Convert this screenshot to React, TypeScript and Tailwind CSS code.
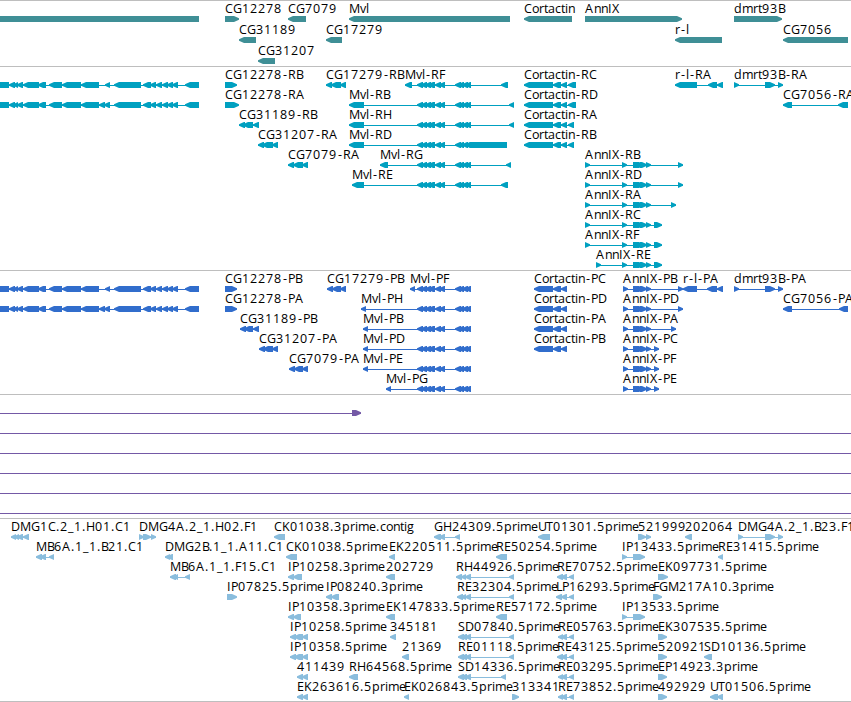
import React from "react";

type Exon = [number, number];
// label, direction, exons
type Feature = [string, "<" | ">", Exon[]];

// horizontal advance of each label character, in pixels
const ADVANCE: Record<string, number> = {
  A: 9, B: 7, C: 8, D: 9, E: 7, F: 6, G: 9, H: 9, I: 4, K: 8, L: 6, M: 11, P: 7, R: 8,
  S: 7, T: 7, U: 8, X: 7, a: 7, c: 6, d: 8, e: 7, g: 8, i: 3, l: 3, m: 11, n: 7, o: 7,
  p: 8, r: 5, t: 4, v: 6, "-": 6, ".": 4, _: 6,
};

const glyphPositions = (label: string, start: number) => {
  let x = start;
  return label
    .split("")
    .map((ch) => {
      const at = ch === "-" ? x + 1 : x;
      x += ADVANCE[ch] ?? 8;
      return at;
    })
    .join(" ");
};

const LONG_TAIL: Exon[] = [
  [114, 141], [143, 151], [150, 156], [156, 162], [162, 168], [167, 173], [172, 178], [185, 199],
];
const LONG_HEAD: Exon[] = [
  [-10, 9], [9, 15], [13, 18], [17, 23], [23, 39], [38, 46], [49, 62], [62, 81], [81, 99],
];
const LONG_A: Exon[] = [...LONG_HEAD, [105, 110], ...LONG_TAIL];
const LONG_B: Exon[] = [...LONG_HEAD, [99, 105], [104, 110], ...LONG_TAIL];

const MVL: Exon[] = [
  [417, 423], [421, 427], [425, 431], [428, 435], [435, 441], [439, 445],
  [455, 461], [458, 464], [462, 468], [465, 471],
];
const ANN: Exon[] = [[633, 644], [640, 647], [646, 651]];
const ANN_R: Exon[] = [[585, 590], [622, 627], ...ANN];
const ANN_P: Exon[] = [[623, 628], ...ANN];
const CORT_R: Exon[] = [[524, 553], [553, 561], [561, 567]];
const CORT_P: Exon[] = [[534, 553], [553, 561], [561, 567]];
const DMRT: Exon[] = [[734, 739], [765, 775], [778, 783]];

const genes: Feature[][] = [
  [
    ["", "<", [[-10, 199]]],
    ["CG12278", ">", [[225, 239]]],
    ["CG7079", "<", [[288, 306]]],
    ["Mvl", "<", [[349, 510]]],
    ["Cortactin", "<", [[524, 572]]],
    ["AnnIX", ">", [[585, 682]]],
    ["dmrt93B", ">", [[734, 782]]],
  ],
  [
    ["CG31189", "<", [[239, 256]]],
    ["CG17279", "<", [[326, 342]]],
    ["r-l", "<", [[675, 722]]],
    ["CG7056", "<", [[783, 848]]],
  ],
  [["CG31207", "<", [[258, 275]]]],
];

const transcripts: Feature[][] = [
  [
    ["", "<", LONG_A],
    ["CG12278-RB", ">", [[225, 237]]],
    ["CG17279-RB", "<", [[326, 332], [331, 341], [340, 346]]],
    ["Mvl-RF", "<", [[405, 412], ...MVL, [501, 508]]],
    ["Cortactin-RC", "<", [...CORT_R, [568, 576]]],
    ["r-l-RA", "<", [[675, 697], [708, 717], [717, 723]]],
    ["dmrt93B-RA", ">", DMRT],
  ],
  [
    ["", "<", LONG_B],
    ["CG12278-RA", ">", [[225, 239]]],
    ["Mvl-RB", "<", [[349, 364], ...MVL, [509, 514]]],
    ["Cortactin-RD", "<", [...CORT_R, [568, 576]]],
    ["CG7056-RA", "<", [[783, 792], [838, 848]]],
  ],
  [
    ["CG31189-RB", "<", [[239, 245], [243, 253], [253, 259]]],
    ["Mvl-RH", "<", [[349, 364], ...MVL, [509, 514]]],
    ["Cortactin-RA", "<", [...CORT_R, [568, 574]]],
  ],
  [
    ["CG31207-RA", "<", [[258, 264], [262, 273], [272, 278]]],
    ["Mvl-RD", "<", [[349, 364], ...MVL, [466, 507]]],
    ["Cortactin-RB", "<", [...CORT_R, [568, 574]]],
  ],
  [
    ["CG7079-RA", "<", [[288, 294], [293, 303], [302, 308]]],
    ["Mvl-RG", "<", [[380, 388], ...MVL, [506, 511]]],
    ["AnnIX-RB", ">", [...ANN_R, [678, 683]]],
  ],
  [
    ["Mvl-RE", "<", [[352, 364], ...MVL, [501, 508]]],
    ["AnnIX-RD", ">", [...ANN_R, [678, 683]]],
  ],
  [["AnnIX-RA", ">", [...ANN_R, [671, 676]]]],
  [["AnnIX-RC", ">", [...ANN_R, [654, 662]]]],
  [["AnnIX-RF", ">", [...ANN_R, [654, 662]]]],
  [["AnnIX-RE", ">", [[596, 601], [622, 627], ...ANN, [654, 662]]]],
];

const proteins: Feature[][] = [
  [
    ["", "<", LONG_A],
    ["CG12278-PB", ">", [[225, 237]]],
    ["CG17279-PB", "<", [[327, 333], [332, 341], [340, 346]]],
    ["Mvl-PF", "<", [[410, 415], ...MVL]],
    ["Cortactin-PC", "<", CORT_P],
    ["AnnIX-PB", ">", [...ANN_P, [678, 683]]],
    ["r-l-PA", "<", [[683, 697], [707, 717], [717, 723]]],
    ["dmrt93B-PA", ">", DMRT],
  ],
  [
    ["", "<", LONG_B],
    ["CG12278-PA", ">", [[225, 237]]],
    ["Mvl-PH", "<", [[361, 366], ...MVL]],
    ["Cortactin-PD", "<", CORT_P],
    ["AnnIX-PD", ">", [...ANN_P, [678, 683]]],
    ["CG7056-PA", "<", [[783, 792], [839, 848]]],
  ],
  [
    ["CG31189-PB", "<", [[240, 246], [244, 253], [253, 259]]],
    ["Mvl-PB", "<", [[363, 368], ...MVL]],
    ["Cortactin-PA", "<", CORT_P],
    ["AnnIX-PA", ">", [...ANN_P, [671, 676]]],
  ],
  [
    ["CG31207-PA", "<", [[259, 265], [263, 273], [272, 278]]],
    ["Mvl-PD", "<", [[363, 368], ...MVL]],
    ["Cortactin-PB", "<", CORT_P],
    ["AnnIX-PC", ">", [...ANN_P, [654, 659]]],
  ],
  [
    ["CG7079-PA", "<", [[289, 295], [294, 303], [302, 308]]],
    ["Mvl-PE", "<", [[363, 368], ...MVL]],
    ["AnnIX-PF", ">", [...ANN_P, [654, 659]]],
  ],
  [
    ["Mvl-PG", "<", [[386, 391], ...MVL]],
    ["AnnIX-PE", ">", [...ANN_P, [654, 659]]],
  ],
];

const spanning: Exon[] = [[-20, -10], [861, 870]];

const alignments: Feature[][] = [
  [["", ">", [[-20, -10], [352, 361]]]],
  [["", ">", spanning]],
  [["", ">", spanning]],
  [["", ">", spanning]],
  [["", ">", spanning]],
  [["", ">", spanning]],
];

const ests: Feature[][] = [
  [
    ["DMG1C.2_1.H01.C1", "<", [[11, 16], [14, 19], [17, 23], [23, 29]]],
    ["DMG4A.2_1.H02.F1", ">", [[139, 144], [143, 151], [151, 156]]],
    ["CK01038.3prime.contig", "<", [[274, 285]]],
    ["GH24309.5prime", "<", [[434, 441], [439, 445], [455, 460]]],
    ["UT01301.5prime", "<", [[538, 550]]],
    ["521999", ">", [[638, 646], [646, 651]]],
    ["202064", "<", [[685, 692]]],
    ["DMG4A.2_1.B23.F1", ">", [[738, 743], [765, 775], [778, 783]]],
  ],
  [
    ["MB6A.1_1.B21.C1", "<", [[36, 42], [40, 46], [49, 54]]],
    ["DMG2B.1_1.A11.C1", "<", [[165, 170], [167, 173]]],
    ["CK01038.5prime", "<", [[286, 297]]],
    ["EK220511.5prime", "<", [[389, 395]]],
    ["RE50254.5prime", "<", [[496, 507]]],
    ["IP13433.5prime", ">", [[622, 627], [633, 645]]],
    ["RE31415.5prime", "<", [[718, 723]]],
  ],
  [
    ["MB6A.1_1.F15.C1", "<", [[170, 176], [173, 178], [185, 190]]],
    ["IP10258.3prime", "<", [[288, 294], [293, 302]]],
    ["202729", "<", [[386, 395]]],
    ["RH44926.5prime", "<", [[456, 462], [461, 466], [465, 471], [509, 514]]],
    ["RE70752.5prime", "<", [[557, 563], [561, 567], [569, 574]]],
    ["EK097731.5prime", ">", [[658, 668]]],
  ],
  [
    ["IP07825.5prime", ">", [[227, 237]]],
    ["IP08240.3prime", "<", [[326, 332], [331, 339]]],
    ["RE32304.5prime", "<", [[457, 463], [461, 466], [465, 471], [509, 514]]],
    ["LP16293.5prime", "<", [[556, 562], [561, 567], [569, 574]]],
    ["FGM217A10.3prime", ">", [[653, 662]]],
  ],
  [
    ["IP10358.3prime", "<", [[288, 294], [293, 301]]],
    ["EK147833.5prime", "<", [[386, 395]]],
    ["RE57172.5prime", "<", [[496, 507]]],
    ["IP13533.5prime", ">", [[622, 627], [633, 645]]],
  ],
  [
    ["IP10258.5prime", "<", [[290, 296], [294, 303], [302, 308]]],
    ["345181", "<", [[390, 396]]],
    ["SD07840.5prime", "<", [[458, 464], [461, 467], [465, 471], [509, 514]]],
    ["RE05763.5prime", "<", [[558, 563], [561, 567], [569, 574]]],
    ["EK307535.5prime", ">", [[658, 667]]],
  ],
  [
    ["IP10358.5prime", "<", [[290, 296], [294, 303], [302, 308]]],
    ["21369", "<", [[402, 409]]],
    ["RE01118.5prime", "<", [[458, 464], [461, 467], [465, 471], [509, 514]]],
    ["RE43125.5prime", "<", [[557, 563], [561, 567], [569, 574]]],
    ["520921", ">", [[658, 667]]],
    ["SD10136.5prime", "<", [[704, 712]]],
  ],
  [
    ["411439", "<", [[297, 303], [302, 308]]],
    ["RH64568.5prime", "<", [[349, 358]]],
    ["SD14336.5prime", "<", [[458, 464], [461, 467], [465, 471], [501, 506]]],
    ["RE03295.5prime", "<", [[558, 563], [561, 567], [569, 574]]],
    ["EP14923.3prime", ">", [[658, 667]]],
  ],
  [
    ["EK263616.5prime", "<", [[297, 303], [302, 308]]],
    ["EK026843.5prime", "<", [[404, 409]]],
    ["313341", ">", [[512, 519]]],
    ["RE73852.5prime", "<", [[558, 563], [561, 567], [569, 574]]],
    ["492929", ">", [[658, 667]]],
    ["UT01506.5prime", "<", [[710, 718], [717, 723]]],
  ],
];

const exonPoints = ([a, b]: Exon, dir: "<" | ">") => {
  const head = Math.min(5, b - a);
  return dir === "<"
    ? `${a},18.2 ${a + head},16 ${b},16 ${b},22 ${a + head},22 ${a},19.8`
    : `${b},18.2 ${b - head},16 ${a},16 ${a},22 ${b - head},22 ${b},19.8`;
};

const Glyph = ({ feature }: { feature: Feature }) => {
  const [label, dir, exons] = feature;
  const start = exons[0][0];
  const end = exons[exons.length - 1][1];
  return (
    <g>
      {exons.length > 1 && (
        <rect x={start} y={19} width={end - start} height={1} shapeRendering="crispEdges" />
      )}
      {exons.map((exon, i) => (
        <polygon key={i} points={exonPoints(exon, dir)} />
      ))}
      {label && (
        <text x={glyphPositions(label, start)} y={13} className="fill-black">
          {label}
        </text>
      )}
    </g>
  );
};

const Track = ({ rows, className, rowClass }: { rows: Feature[][]; className: string; rowClass: string }) => (
  <section className={`flex shrink-0 flex-col border-t border-[#bebebe] ${className}`}>
    <div className="-mt-px flex flex-col">
      {rows.map((row, i) => (
        <svg key={i} className={`block w-full shrink-0 overflow-visible text-[12.5px] ${rowClass}`}>
          {row.map((feature, j) => (
            <Glyph key={j} feature={feature} />
          ))}
        </svg>
      ))}
    </div>
  </section>
);

const App = () => {
  return (
    <main className="flex h-[702px] w-[851px] flex-col overflow-hidden border-b border-[#bebebe] bg-white font-['Open_Sans',sans-serif]">
      <Track rows={genes} className="h-[66px] fill-[#3f8f96]" rowClass="h-[21px]" />
      <Track rows={transcripts} className="h-[204px] fill-[#00a0c0]" rowClass="h-5" />
      <Track rows={proteins} className="h-[124px] fill-[#316dcc]" rowClass="h-5" />
      <Track rows={alignments} className="h-[124px] fill-[#7459a6]" rowClass="h-5" />
      <Track rows={ests} className="h-[183px] fill-[#8abddd]" rowClass="h-5" />
    </main>
  );
};

export default App;
